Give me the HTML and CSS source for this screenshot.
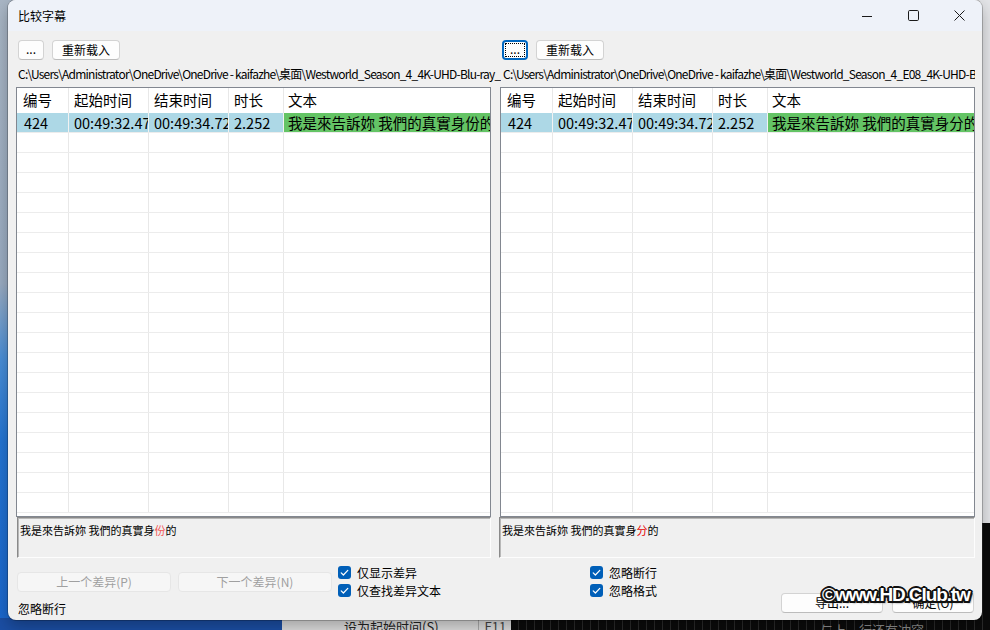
FILE: index.html
```html
<!DOCTYPE html>
<html lang="zh-CN">
<head>
<meta charset="utf-8">
<title>比较字幕</title>
<link rel="stylesheet" href="styles.css">
</head>
<body>
<div class="desktop">
  <div class="wallpaper"></div>
  <div class="bgapp-right"></div>
  <div class="bgapp-bottom">
    <div class="bg-blue"></div>
    <div class="bg-menu"><span class="mi">设为起始时间(S)</span><span class="msep"></span><span class="key">F11</span></div>
    <div class="bg-black"><span class="hint">与上一行还有冲突</span></div>
  </div>

  <div class="window">
    <div class="titlebar">
      <span class="title">比较字幕</span>
      <div class="caption">
        <span class="cbtn"><svg width="10" height="10" viewBox="0 0 10 10"><path d="M0 5.5h10" stroke="#1a1a1a" stroke-width="1" fill="none"/></svg></span>
        <span class="cbtn"><svg width="11" height="11" viewBox="0 0 11 11"><rect x="0.5" y="0.5" width="10" height="10" rx="1.2" stroke="#1a1a1a" stroke-width="1" fill="none"/></svg></span>
        <span class="cbtn"><svg width="11" height="11" viewBox="0 0 11 11"><path d="M0.5 0.5L10.5 10.5M10.5 0.5L0.5 10.5" stroke="#1a1a1a" stroke-width="1" fill="none"/></svg></span>
      </div>
    </div>

    <div class="content">
      <div class="toolbar">
        <div class="tools"><button class="btn dots">...</button><button class="btn reload">重新载入</button></div>
        <div class="tools"><button class="btn dots focus"><span class="focusring">...</span></button><button class="btn reload">重新载入</button></div>
      </div>

      <div class="paths">
        <div class="path">C:\Users\Administrator\OneDrive\OneDrive - kaifazhe\桌面\Westworld_Season_4_4K-UHD-Blu-ray_</div>
        <div class="path">C:\Users\Administrator\OneDrive\OneDrive - kaifazhe\桌面\Westworld_Season_4_E08_4K-UHD-Blu</div>
      </div>

      <div class="grids">
        <div class="grid">
          <div class="row head"><span class="c c1">编号</span><span class="c c2">起始时间</span><span class="c c3">结束时间</span><span class="c c4">时长</span><span class="c c5">文本</span></div>
          <div class="row sel"><span class="c c1">424</span><span class="c c2">00:49:32.472</span><span class="c c3">00:49:34.724</span><span class="c c4">2.252</span><span class="c c5 diff">我是來告訴妳 我們的真實身份的</span></div>
          <div class="row"><span class="c c1"></span><span class="c c2"></span><span class="c c3"></span><span class="c c4"></span><span class="c c5"></span></div>
          <div class="row"><span class="c c1"></span><span class="c c2"></span><span class="c c3"></span><span class="c c4"></span><span class="c c5"></span></div>
          <div class="row"><span class="c c1"></span><span class="c c2"></span><span class="c c3"></span><span class="c c4"></span><span class="c c5"></span></div>
          <div class="row"><span class="c c1"></span><span class="c c2"></span><span class="c c3"></span><span class="c c4"></span><span class="c c5"></span></div>
          <div class="row"><span class="c c1"></span><span class="c c2"></span><span class="c c3"></span><span class="c c4"></span><span class="c c5"></span></div>
          <div class="row"><span class="c c1"></span><span class="c c2"></span><span class="c c3"></span><span class="c c4"></span><span class="c c5"></span></div>
          <div class="row"><span class="c c1"></span><span class="c c2"></span><span class="c c3"></span><span class="c c4"></span><span class="c c5"></span></div>
          <div class="row"><span class="c c1"></span><span class="c c2"></span><span class="c c3"></span><span class="c c4"></span><span class="c c5"></span></div>
          <div class="row"><span class="c c1"></span><span class="c c2"></span><span class="c c3"></span><span class="c c4"></span><span class="c c5"></span></div>
          <div class="row"><span class="c c1"></span><span class="c c2"></span><span class="c c3"></span><span class="c c4"></span><span class="c c5"></span></div>
          <div class="row"><span class="c c1"></span><span class="c c2"></span><span class="c c3"></span><span class="c c4"></span><span class="c c5"></span></div>
          <div class="row"><span class="c c1"></span><span class="c c2"></span><span class="c c3"></span><span class="c c4"></span><span class="c c5"></span></div>
          <div class="row"><span class="c c1"></span><span class="c c2"></span><span class="c c3"></span><span class="c c4"></span><span class="c c5"></span></div>
          <div class="row"><span class="c c1"></span><span class="c c2"></span><span class="c c3"></span><span class="c c4"></span><span class="c c5"></span></div>
          <div class="row"><span class="c c1"></span><span class="c c2"></span><span class="c c3"></span><span class="c c4"></span><span class="c c5"></span></div>
          <div class="row"><span class="c c1"></span><span class="c c2"></span><span class="c c3"></span><span class="c c4"></span><span class="c c5"></span></div>
          <div class="row"><span class="c c1"></span><span class="c c2"></span><span class="c c3"></span><span class="c c4"></span><span class="c c5"></span></div>
          <div class="row"><span class="c c1"></span><span class="c c2"></span><span class="c c3"></span><span class="c c4"></span><span class="c c5"></span></div>
          <div class="row"><span class="c c1"></span><span class="c c2"></span><span class="c c3"></span><span class="c c4"></span><span class="c c5"></span></div>
        </div>
        <div class="grid">
          <div class="row head"><span class="c c1">编号</span><span class="c c2">起始时间</span><span class="c c3">结束时间</span><span class="c c4">时长</span><span class="c c5">文本</span></div>
          <div class="row sel"><span class="c c1">424</span><span class="c c2">00:49:32.472</span><span class="c c3">00:49:34.724</span><span class="c c4">2.252</span><span class="c c5 diff">我是來告訴妳 我們的真實身分的</span></div>
          <div class="row"><span class="c c1"></span><span class="c c2"></span><span class="c c3"></span><span class="c c4"></span><span class="c c5"></span></div>
          <div class="row"><span class="c c1"></span><span class="c c2"></span><span class="c c3"></span><span class="c c4"></span><span class="c c5"></span></div>
          <div class="row"><span class="c c1"></span><span class="c c2"></span><span class="c c3"></span><span class="c c4"></span><span class="c c5"></span></div>
          <div class="row"><span class="c c1"></span><span class="c c2"></span><span class="c c3"></span><span class="c c4"></span><span class="c c5"></span></div>
          <div class="row"><span class="c c1"></span><span class="c c2"></span><span class="c c3"></span><span class="c c4"></span><span class="c c5"></span></div>
          <div class="row"><span class="c c1"></span><span class="c c2"></span><span class="c c3"></span><span class="c c4"></span><span class="c c5"></span></div>
          <div class="row"><span class="c c1"></span><span class="c c2"></span><span class="c c3"></span><span class="c c4"></span><span class="c c5"></span></div>
          <div class="row"><span class="c c1"></span><span class="c c2"></span><span class="c c3"></span><span class="c c4"></span><span class="c c5"></span></div>
          <div class="row"><span class="c c1"></span><span class="c c2"></span><span class="c c3"></span><span class="c c4"></span><span class="c c5"></span></div>
          <div class="row"><span class="c c1"></span><span class="c c2"></span><span class="c c3"></span><span class="c c4"></span><span class="c c5"></span></div>
          <div class="row"><span class="c c1"></span><span class="c c2"></span><span class="c c3"></span><span class="c c4"></span><span class="c c5"></span></div>
          <div class="row"><span class="c c1"></span><span class="c c2"></span><span class="c c3"></span><span class="c c4"></span><span class="c c5"></span></div>
          <div class="row"><span class="c c1"></span><span class="c c2"></span><span class="c c3"></span><span class="c c4"></span><span class="c c5"></span></div>
          <div class="row"><span class="c c1"></span><span class="c c2"></span><span class="c c3"></span><span class="c c4"></span><span class="c c5"></span></div>
          <div class="row"><span class="c c1"></span><span class="c c2"></span><span class="c c3"></span><span class="c c4"></span><span class="c c5"></span></div>
          <div class="row"><span class="c c1"></span><span class="c c2"></span><span class="c c3"></span><span class="c c4"></span><span class="c c5"></span></div>
          <div class="row"><span class="c c1"></span><span class="c c2"></span><span class="c c3"></span><span class="c c4"></span><span class="c c5"></span></div>
          <div class="row"><span class="c c1"></span><span class="c c2"></span><span class="c c3"></span><span class="c c4"></span><span class="c c5"></span></div>
          <div class="row"><span class="c c1"></span><span class="c c2"></span><span class="c c3"></span><span class="c c4"></span><span class="c c5"></span></div>
        </div>
      </div>

      <div class="diffs">
        <div class="diffbox left">我是來告訴妳 我們的真實身<span class="mark soft">份</span>的</div>
        <div class="diffbox">我是來告訴妳 我們的真實身<span class="mark">分</span>的</div>
      </div>

      <div class="bottom">
        <div class="navcol">
          <div class="navbtns"><button class="btn nav" disabled>上一个差异(P)</button><button class="btn nav" disabled>下一个差异(N)</button></div>
          <div class="status">忽略断行</div>
        </div>
        <div class="checks">
          <label class="chk"><span class="box"><svg width="13" height="13" viewBox="0 0 13 13"><rect width="13" height="13" rx="3" fill="#005fb8"/><path d="M3.2 6.8L5.4 9L9.8 4.4" stroke="#fff" stroke-width="1.2" fill="none" stroke-linecap="round" stroke-linejoin="round"/></svg></span>仅显示差异</label>
          <label class="chk"><span class="box"><svg width="13" height="13" viewBox="0 0 13 13"><rect width="13" height="13" rx="3" fill="#005fb8"/><path d="M3.2 6.8L5.4 9L9.8 4.4" stroke="#fff" stroke-width="1.2" fill="none" stroke-linecap="round" stroke-linejoin="round"/></svg></span>仅查找差异文本</label>
        </div>
        <div class="checks grow">
          <label class="chk"><span class="box"><svg width="13" height="13" viewBox="0 0 13 13"><rect width="13" height="13" rx="3" fill="#005fb8"/><path d="M3.2 6.8L5.4 9L9.8 4.4" stroke="#fff" stroke-width="1.2" fill="none" stroke-linecap="round" stroke-linejoin="round"/></svg></span>忽略断行</label>
          <label class="chk"><span class="box"><svg width="13" height="13" viewBox="0 0 13 13"><rect width="13" height="13" rx="3" fill="#005fb8"/><path d="M3.2 6.8L5.4 9L9.8 4.4" stroke="#fff" stroke-width="1.2" fill="none" stroke-linecap="round" stroke-linejoin="round"/></svg></span>忽略格式</label>
        </div>
        <div class="actions"><button class="btn export">导出...</button><button class="btn ok">确定(O)</button></div>
      </div>
    </div>

    <div class="watermark">©www.HD.Club.tw</div>
  </div>
</div>
</body>
</html>
```

FILE: styles.css
```css
* { box-sizing: border-box; margin: 0; padding: 0; }
html, body { width: 990px; height: 630px; overflow: hidden; }
body {
  font-family: "Noto Sans CJK SC", "Noto Sans", sans-serif;
  font-size: 12px;
  color: #000;
  background: #1a5bc4;
}
.desktop { position: relative; width: 990px; height: 630px; overflow: hidden; }
.wallpaper {
  position: absolute; inset: 0;
  background: linear-gradient(180deg, #a9b6c5 0%, #9aacc2 45%, #4a8fd8 57%, #2475d4 70%, #1a66cc 100%);
}
.bgapp-right {
  position: absolute; left: 976px; top: 0; width: 14px; height: 523px;
  background: #e4e5e8;
  border-left: 1px solid #b8b8b8;
}
.bgapp-bottom {
  position: absolute; left: 0; top: 523px; width: 990px; height: 107px;
  display: flex; align-items: flex-end;
}
.bg-blue { width: 282px; height: 12px; background: #1b4ea3; }
.bg-menu {
  width: 229px; height: 12px; background: #dcdcdc;
  display: flex; align-items: flex-start; font-size: 13px; color: #222; overflow: hidden;
}
.bg-menu .mi { margin-left: 62px; line-height: 16px; margin-top: 1px; }
.bg-menu .msep { width: 1px; height: 12px; background: #aaa; margin-left: 39px; }
.bg-menu .key { margin-left: 6px; color: #444; line-height: 16px; margin-top: 1px; }
.bg-black {
  flex: 1; height: 107px; background-color: #0b0b0b;
  background-image: repeating-linear-gradient(90deg, transparent 0 7px, #2a2a2a 7px 8px);
  display: flex; align-items: flex-end; overflow: hidden;
}
.bg-black .hint { margin-left: 309px; color: #8a8a8a; font-size: 13px; line-height: 16px; margin-bottom: -8px; }

.window {
  position: absolute; left: 8px; top: 0; width: 974px; height: 620px;
  background: #f0f0f0;
  border-radius: 8px;
  box-shadow: 0 0 0 1px rgba(0,0,0,0.22), 0 6px 16px rgba(0,0,0,0.28);
  overflow: hidden;
  display: flex; flex-direction: column;
  z-index: 2;
}
.titlebar {
  flex: none; height: 31px; background: #eef2f9;
  display: flex; align-items: center; justify-content: space-between;
}
.title { padding-left: 10px; font-size: 12px; line-height: 16px; }
.caption { display: flex; height: 31px; }
.cbtn { width: 46px; height: 31px; display: flex; align-items: center; justify-content: center; }

.content { flex: 1; padding: 9px 7px 0 8px; display: flex; flex-direction: column; }

.toolbar { display: grid; grid-template-columns: 475px 475px; column-gap: 9px; height: 20px; }
.tools { display: flex; gap: 8px; padding-left: 2px; }
.btn {
  font-family: inherit; font-size: 12px; color: #000;
  height: 20px; background: #fdfdfd;
  border: 1px solid #d3d3d3; border-bottom-color: #bcbcbc;
  border-radius: 4px; line-height: 16px;
  display: flex; align-items: center; justify-content: center;
}
.btn.dots { width: 26px; padding-bottom: 2px; }
.btn.reload { width: 68px; }
.btn.focus { border: 2px solid #0067c0; padding: 1px; }
.focusring {
  display: flex; align-items: center; justify-content: center;
  width: 100%; height: 100%;
  border: 1px dotted #000;
  padding-bottom: 3px;
}

.paths { display: grid; grid-template-columns: 485px 1fr; height: 27px; align-items: center; }
.path {
  white-space: nowrap; overflow: hidden;
  padding-left: 2px; font-size: 12px; line-height: 16px;
  letter-spacing: -0.78px;
}

.grids { display: grid; grid-template-columns: 475px 475px; column-gap: 9px; height: 430px; }
.grid {
  border: 1px solid #828790; background: #fff;
  overflow: hidden; font-size: 14.5px;
}
.row { display: flex; height: 20px; border-bottom: 1px solid #ececec; }
.row.head { height: 25px; border-bottom: none; }
.c {
  flex: none; display: block; overflow: hidden; white-space: nowrap;
  border-right: 1px solid #e8e8e8;
  padding-left: 5px; line-height: 19px;
}
.head .c { line-height: 24px; }
.c1 { width: 52px; padding-left: 6px; }
.c2 { width: 80px; }
.c3 { width: 80px; }
.c4 { width: 55px; }
.c5 { flex: 1; border-right: none; padding-left: 4px; }
.sel .c { background: #add8e6; border-right-color: #f2f2f2; }
.sel .c1 { padding-left: 7px; }
.sel .c.diff { background: #64c465; }

.diffs { display: grid; grid-template-columns: 475px 476px; column-gap: 8px; height: 41px; }
.diffbox {
  background: #f0f0f0;
  border: 1px solid; border-color: #8a8a8a #fdfdfd #fdfdfd #8a8a8a;
  box-shadow: inset 1px 1px 0 #b8b8b8;
  font-size: 11px; line-height: 14px; padding: 5px 0 0 2px;
  white-space: nowrap; overflow: hidden;
}
.diffbox.left { margin-left: 1px; }
.mark { color: #e60000; }
.mark.soft { color: #f25a5a; }

.bottom { flex: 1; display: flex; }
.navcol { width: 322px; padding-top: 14px; padding-left: 1px; }
.navbtns { display: flex; gap: 7px; }
.btn.nav { width: 154px; background: #f6f6f6; border-color: #e6e6e6; color: #a0a0a0; }
.status { margin-top: 9px; padding-left: 1px; line-height: 16px; font-size: 12px; }
.checks { width: 252px; padding-top: 8px; display: flex; flex-direction: column; gap: 5px; }
.checks.grow { flex: 1; width: auto; }
.chk { display: flex; align-items: center; height: 13px; gap: 6px; font-size: 12px; line-height: 13px; }
.box { display: block; width: 13px; height: 13px; }
.box svg { display: block; }
.actions { display: flex; gap: 9px; align-items: flex-end; padding-bottom: 7px; padding-right: 1px; }
.btn.export { width: 102px; }
.btn.ok { width: 82px; }

.watermark {
  position: absolute; left: 814px; top: 583px;
  font-family: "Liberation Sans", Arial, sans-serif; font-weight: bold;
  font-size: 19px; letter-spacing: -1.1px; line-height: 24px;
  color: #fff;
  text-shadow:
    -1.5px -1.5px 0 #111, 1.5px -1.5px 0 #111, -1.5px 1.5px 0 #111, 1.5px 1.5px 0 #111,
    0 -2px 0 #111, 0 2px 0 #111, -2px 0 0 #111, 2px 0 0 #111,
    2px 2px 2px rgba(0,0,0,0.6);
}
```
